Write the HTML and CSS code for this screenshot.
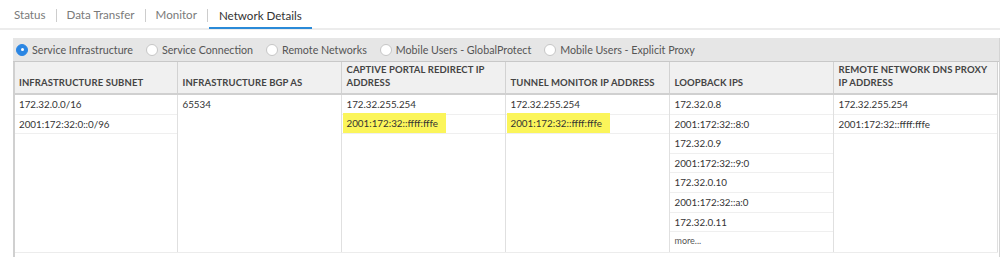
FILE: index.html
```html
<!DOCTYPE html>
<html>
<head>
<meta charset="utf-8">
<link rel="stylesheet" href="styles.css">
</head>
<body>
<div class="tabs">
  <span class="tab">Status</span><span class="sep"></span>
  <span class="tab">Data Transfer</span><span class="sep"></span>
  <span class="tab">Monitor</span><span class="sep"></span>
  <span class="tab active">Network Details</span>
</div>
<div class="panel">
  <div class="radios">
    <label class="radio"><span class="dot on"></span>Service Infrastructure</label>
    <label class="radio"><span class="dot"></span>Service Connection</label>
    <label class="radio"><span class="dot"></span>Remote Networks</label>
    <label class="radio"><span class="dot"></span>Mobile Users - GlobalProtect</label>
    <label class="radio"><span class="dot"></span>Mobile Users - Explicit Proxy</label>
  </div>
  <div class="tablewrap">
  <table class="grid">
    <thead>
      <tr>
        <th>INFRASTRUCTURE SUBNET</th>
        <th>INFRASTRUCTURE BGP AS</th>
        <th>CAPTIVE PORTAL REDIRECT IP ADDRESS</th>
        <th>TUNNEL MONITOR IP ADDRESS</th>
        <th>LOOPBACK IPS</th>
        <th>REMOTE NETWORK DNS PROXY IP ADDRESS</th>
      </tr>
    </thead>
    <tbody>
      <tr>
        <td><div class="item">172.32.0.0/16</div><div class="item">2001:172:32:0::0/96</div></td>
        <td><div class="item plain">65534</div></td>
        <td><div class="item">172.32.255.254</div><div class="item"><span class="hl">2001:172:32::ffff:fffe</span></div></td>
        <td><div class="item">172.32.255.254</div><div class="item"><span class="hl">2001:172:32::ffff:fffe</span></div></td>
        <td>
          <div class="item">172.32.0.8</div>
          <div class="item">2001:172:32::8:0</div>
          <div class="item">172.32.0.9</div>
          <div class="item">2001:172:32::9:0</div>
          <div class="item">172.32.0.10</div>
          <div class="item">2001:172:32::a:0</div>
          <div class="item">172.32.0.11</div>
          <div class="item more">more...</div>
        </td>
        <td><div class="item">172.32.255.254</div><div class="item">2001:172:32::ffff:fffe</div></td>
      </tr>
    </tbody>
  </table>
  </div>
</div>
</body>
</html>
```

FILE: styles.css
```css
html, body {
  margin: 0;
  padding: 0;
  background: #fff;
  font-family: Lato, "Open Sans", sans-serif;
  color: #333;
  overflow: hidden;
}

.tabs {
  display: flex;
  align-items: center;
  height: 28px;
  padding-left: 5px;
  border-bottom: 2px solid #ececec;
  font-size: 11.6px;
}
.tab {
  color: #7a7a7a;
  padding: 1px 9px 0;
  height: 28px;
  line-height: 28px;
  box-sizing: border-box;
}
.tab.active {
  color: #333;
  padding: 1px 10px 0;
  border-bottom: 2px solid #2a8ad8;
  margin-bottom: -1px;
}
.sep {
  width: 1px;
  height: 13px;
  margin: 2px 1px 0;
  background: #cdcdcd;
}

.panel {
  margin: 8px 0 0 13px;
  border-right: 1px solid #d4d4d4;
  height: 227px;
  display: flex;
  flex-direction: column;
}

.radios {
  display: flex;
  align-items: center;
  height: 23px;
  flex: none;
  background: #e6e6e6;
  padding-left: 3px;
  font-size: 10.7px;
  color: #555;
  border-bottom: 1px solid #c8c8c8;
}
.radio {
  display: flex;
  align-items: center;
  margin-right: 13px;
}
.dot {
  width: 12px;
  height: 12px;
  border-radius: 50%;
  border: 1px solid #c6c6c6;
  background: #fff;
  margin-right: 4px;
  box-sizing: border-box;
  position: relative;
}
.dot.on {
  background: #2b86e3;
  border-color: #2b86e3;
}
.dot.on::after {
  content: "";
  position: absolute;
  left: 3.5px;
  top: 3.5px;
  width: 3px;
  height: 3px;
  border-radius: 50%;
  background: #fff;
}

.tablewrap {
  flex: 1;
  border-left: 2px solid #d0d0d0;
}

.grid {
  border-collapse: collapse;
  table-layout: fixed;
  width: 982px;
}
.grid th {
  width: 164px;
  height: 32px;
  box-sizing: border-box;
  background: #f0f0f0;
  text-align: left;
  vertical-align: bottom;
  font-size: 9.5px;
  font-weight: 700;
  color: #444;
  line-height: 13px;
  padding: 0 4px 4px 5px;
  border-left: 1px solid #d2d2d2;
  border-right: 1px solid #d2d2d2;
  border-bottom: 2px solid #d0d0d0;
  letter-spacing: 0.1px;
}
.grid th:first-child {
  width: 162px;
  border-left: none;
  padding-left: 4px;
}
.grid td {
  vertical-align: top;
  padding: 0;
  height: 157px;
  border-left: 1px solid #e0e0e0;
  border-right: 1px solid #e0e0e0;
  border-bottom: 1px solid #ececec;
}
.grid td:first-child {
  border-left: none;
}
.item {
  height: 19.6px;
  box-sizing: border-box;
  border-bottom: 1px solid #efefef;
  font-size: 9.8px;
  line-height: 18.6px;
  padding-left: 5px;
  color: #333;
  white-space: nowrap;
}
.grid td:first-child .item {
  padding-left: 4px;
}
.item.plain {
  border-bottom: none;
}
.item.more {
  border-bottom: none;
  font-size: 9px;
  color: #555;
}
.hl {
  display: inline-block;
  vertical-align: top;
  background: #fbf55a;
  margin-left: -4px;
  margin-top: -2px;
  padding: 0 8px 0 4px;
  height: 20px;
  line-height: 21px;
}
```
